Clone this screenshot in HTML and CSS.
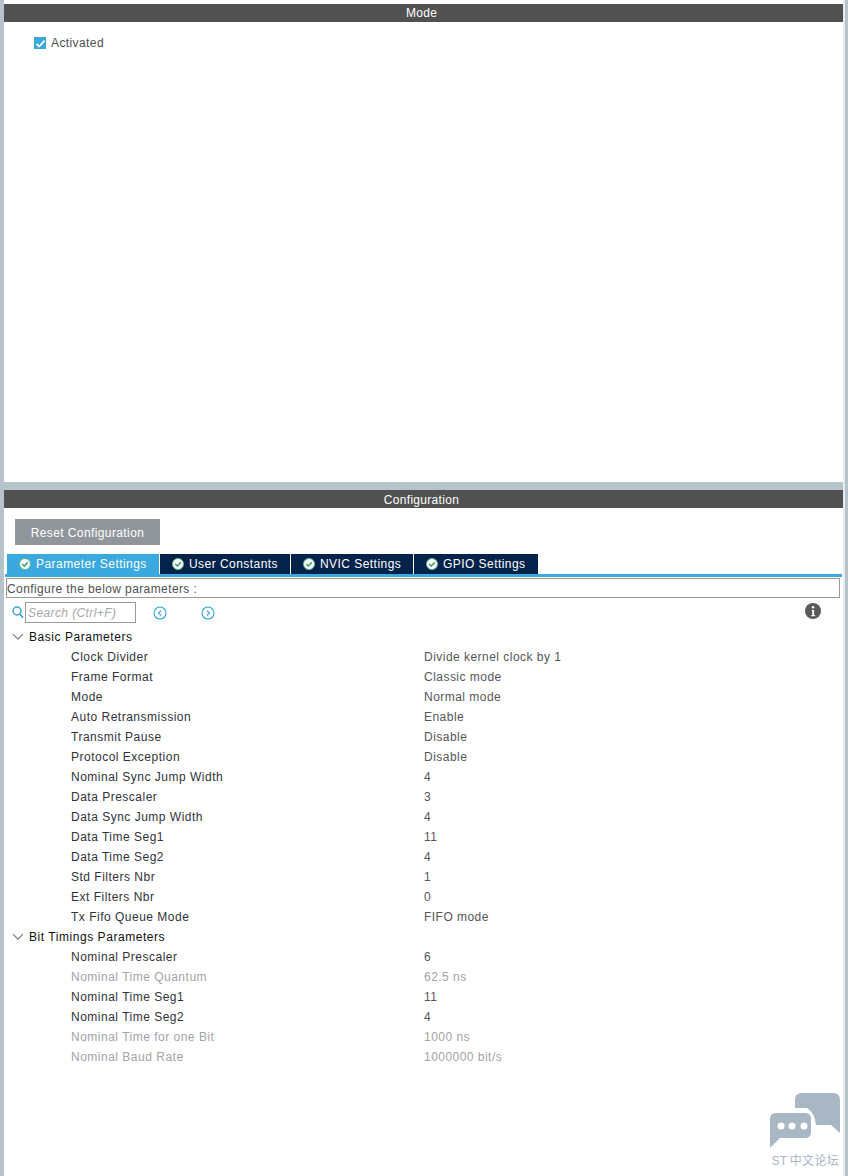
FILE: index.html
```html
<!DOCTYPE html>
<html lang="en">
<head>
    <meta charset="UTF-8">
    <title>Configuration</title>
    <link rel="stylesheet" href="styles.css">
</head>
<body>
    <div class="app">
        <section class="mode-panel">
            <h2 class="panel-title">Mode</h2>
            <label class="activated">
                <span class="checkbox">
                    <svg width="13" height="13" viewBox="0 0 13 13"><path d="M2.5 6.8 5.2 9.5 10.5 3.6" fill="none" stroke="#fff" stroke-width="1.7"/></svg>
                </span>
                Activated
            </label>
        </section>

        <section class="config-panel">
            <h2 class="panel-title">Configuration</h2>
            <button class="reset-btn">Reset Configuration</button>

            <div class="tabs">
                <div class="tab tab-active tab-param">
                    <svg class="tab-icon" width="12" height="12" viewBox="0 0 12 12"><circle cx="6" cy="6" r="5.5" fill="#fff" stroke="#5fb98a"/><path d="M3.2 6 5.3 8 8.8 4.2" fill="none" stroke="#3fa36e" stroke-width="1.6"/></svg>
                    Parameter Settings
                </div>
                <div class="tab tab-user">
                    <svg class="tab-icon" width="12" height="12" viewBox="0 0 12 12"><circle cx="6" cy="6" r="5.5" fill="#fff" stroke="#5fb98a"/><path d="M3.2 6 5.3 8 8.8 4.2" fill="none" stroke="#3fa36e" stroke-width="1.6"/></svg>
                    User Constants
                </div>
                <div class="tab tab-nvic">
                    <svg class="tab-icon" width="12" height="12" viewBox="0 0 12 12"><circle cx="6" cy="6" r="5.5" fill="#fff" stroke="#5fb98a"/><path d="M3.2 6 5.3 8 8.8 4.2" fill="none" stroke="#3fa36e" stroke-width="1.6"/></svg>
                    NVIC Settings
                </div>
                <div class="tab tab-gpio">
                    <svg class="tab-icon" width="12" height="12" viewBox="0 0 12 12"><circle cx="6" cy="6" r="5.5" fill="#fff" stroke="#5fb98a"/><path d="M3.2 6 5.3 8 8.8 4.2" fill="none" stroke="#3fa36e" stroke-width="1.6"/></svg>
                    GPIO Settings
                </div>
            </div>

            <div class="configure-box">Configure the below parameters :</div>

            <div class="search-row">
                <svg class="search-icon" width="12" height="13" viewBox="0 0 12 13"><circle cx="5" cy="5" r="3.9" fill="none" stroke="#35a6dc" stroke-width="1.5"/><path d="M7.8 8 11 11.6" stroke="#35a6dc" stroke-width="1.7"/></svg>
                <div class="search-box">Search (Ctrl+F)</div>
                <svg class="nav-prev" width="14" height="14" viewBox="0 0 14 14"><circle cx="7" cy="7" r="6" fill="none" stroke="#35a6dc" stroke-width="1.1"/><path d="M8.2 4.4 5.6 7 8.2 9.6" fill="none" stroke="#35a6dc" stroke-width="1.1"/></svg>
                <svg class="nav-next" width="14" height="14" viewBox="0 0 14 14"><circle cx="7" cy="7" r="6" fill="none" stroke="#35a6dc" stroke-width="1.1"/><path d="M5.8 4.4 8.4 7 5.8 9.6" fill="none" stroke="#35a6dc" stroke-width="1.1"/></svg>
                <svg class="info-icon" width="16" height="16" viewBox="0 0 16 16"><circle cx="8" cy="8" r="8" fill="#5a5a5a"/><circle cx="8" cy="4.2" r="1.3" fill="#fff"/><path d="M6.7 7h2.4v5h1v1.2H6.3V12h1V8.1h-.6z" fill="#fff"/></svg>
            </div>

            <div class="group">
                <svg class="chevron" width="12" height="8" viewBox="0 0 12 8"><path d="M1 1.2 6 6.2 11 1.2" fill="none" stroke="#777" stroke-width="1.1"/></svg>
                Basic Parameters
            </div>
            <div class="row"><span class="name">Clock Divider</span><span class="value">Divide kernel clock by 1</span></div>
            <div class="row"><span class="name">Frame Format</span><span class="value">Classic mode</span></div>
            <div class="row"><span class="name">Mode</span><span class="value">Normal mode</span></div>
            <div class="row"><span class="name">Auto Retransmission</span><span class="value">Enable</span></div>
            <div class="row"><span class="name">Transmit Pause</span><span class="value">Disable</span></div>
            <div class="row"><span class="name">Protocol Exception</span><span class="value">Disable</span></div>
            <div class="row"><span class="name">Nominal Sync Jump Width</span><span class="value">4</span></div>
            <div class="row"><span class="name">Data Prescaler</span><span class="value">3</span></div>
            <div class="row"><span class="name">Data Sync Jump Width</span><span class="value">4</span></div>
            <div class="row"><span class="name">Data Time Seg1</span><span class="value">11</span></div>
            <div class="row"><span class="name">Data Time Seg2</span><span class="value">4</span></div>
            <div class="row"><span class="name">Std Filters Nbr</span><span class="value">1</span></div>
            <div class="row"><span class="name">Ext Filters Nbr</span><span class="value">0</span></div>
            <div class="row"><span class="name">Tx Fifo Queue Mode</span><span class="value">FIFO mode</span></div>

            <div class="group">
                <svg class="chevron" width="12" height="8" viewBox="0 0 12 8"><path d="M1 1.2 6 6.2 11 1.2" fill="none" stroke="#777" stroke-width="1.1"/></svg>
                Bit Timings Parameters
            </div>
            <div class="row"><span class="name">Nominal Prescaler</span><span class="value">6</span></div>
            <div class="row row-muted"><span class="name">Nominal Time Quantum</span><span class="value">62.5 ns</span></div>
            <div class="row"><span class="name">Nominal Time Seg1</span><span class="value">11</span></div>
            <div class="row"><span class="name">Nominal Time Seg2</span><span class="value">4</span></div>
            <div class="row row-muted"><span class="name">Nominal Time for one Bit</span><span class="value">1000 ns</span></div>
            <div class="row row-muted"><span class="name">Nominal Baud Rate</span><span class="value">1000000 bit/s</span></div>

            <div class="watermark">
                <svg width="71" height="55" viewBox="0 0 71 55">
                    <path d="M33 0H64Q71 0 71 7V40L62 32H47Q46 20 38 15H26V7Q26 0 33 0Z" fill="#a9b6c4"/>
                    <path d="M7 20H36Q42 20 42 26V39Q42 45 36 45H11L1 55V26Q1 20 7 20Z" fill="#a9b6c4"/>
                    <circle cx="12" cy="33" r="3.5" fill="#fff"/>
                    <circle cx="23" cy="33" r="3.5" fill="#fff"/>
                    <circle cx="35" cy="33" r="3.5" fill="#fff"/>
                </svg>
                <span class="watermark-text">ST 中文论坛</span>
            </div>
        </section>
    </div>
</body>
</html>
```

FILE: styles.css
```css
* {
    margin: 0;
    padding: 0;
    box-sizing: border-box;
    font-family: "Liberation Sans", Arial, "Noto Sans CJK SC", sans-serif;
}
html, body {
    height: 100%;
}
body {
    background-color: #fff;
    overflow: hidden;
    font-size: 12px;
    letter-spacing: 0.4px;
    color: #4f5052;
}
.app {
    height: 1176px;
    padding-top: 4px;
    display: flex;
    flex-direction: column;
    background: linear-gradient(to right, #b7c3cb 4px, transparent 4px, transparent 843px, #e9ecef 843px, #e9ecef 845px, #b7c3cb 845px);
}
.panel-title {
    height: 18px;
    line-height: 18px;
    padding-right: 4px;
    background-color: #505150;
    color: #fff;
    font-size: 12px;
    font-weight: normal;
    text-align: center;
    letter-spacing: 0.3px;
}
.mode-panel {
    margin: 0 5px 0 4px;
    height: 486px;
    background: #fff;
    border-bottom: 8px solid #b7c3cb;
}
.activated {
    display: flex;
    align-items: center;
    gap: 5px;
    margin: 14px 0 0 30px;
    height: 14px;
    letter-spacing: 0.4px;
}
.checkbox {
    display: block;
    width: 12px;
    height: 12px;
    background-color: #39a9e0;
}
.checkbox svg {
    display: block;
}
.config-panel {
    position: relative;
    flex: 1;
    margin: 0 5px 0 4px;
    padding-bottom: 20px;
    background: #fff;
}
.config-panel .panel-title {
    line-height: 20px;
}
.reset-btn {
    display: block;
    width: 145px;
    height: 26px;
    margin: 11px 0 9px 11px;
    padding-top: 2px;
    background-color: #90969c;
    border: none;
    color: #fff;
    font-size: 12px;
    letter-spacing: 0.4px;
}
.tabs {
    display: flex;
    gap: 1px;
    margin: 0 1px;
    padding-left: 2px;
    height: 23px;
    border-bottom: 3px solid #39a9e0;
}
.tab {
    display: flex;
    align-items: center;
    gap: 5px;
    height: 20px;
    padding-left: 12px;
    background-color: #03234b;
    color: #fff;
    letter-spacing: 0.45px;
}
.tab-active {
    background-color: #39a9e0;
}
.tab-param { width: 152px; }
.tab-user { width: 130px; }
.tab-nvic { width: 122px; }
.tab-gpio { width: 124px; }
.configure-box {
    height: 20px;
    line-height: 20px;
    margin: 1px 3px 0 2px;
    border: 1px solid #999;
}
.search-row {
    position: relative;
    display: flex;
    align-items: center;
    height: 27px;
    margin-top: 2px;
    padding: 0 0 2px 8px;
}
.search-box {
    width: 111px;
    height: 21px;
    line-height: 21px;
    margin-left: 1px;
    padding-left: 2px;
    border: 1px solid #999;
    color: #a8a8a8;
    font-style: italic;
    letter-spacing: 0.4px;
}
.nav-prev {
    margin-left: 17px;
}
.nav-next {
    margin-left: 34px;
}
.info-icon {
    position: absolute;
    right: 22px;
    top: 3px;
}
.group {
    display: flex;
    align-items: center;
    height: 20px;
    padding-left: 8px;
    color: #111;
    letter-spacing: 0.55px;
}
.chevron {
    margin-right: 5px;
}
.row {
    display: flex;
    align-items: center;
    height: 20px;
    padding-left: 67px;
}
.name {
    width: 353px;
    color: #30323a;
    letter-spacing: 0.5px;
}
.value {
    color: #55565a;
    letter-spacing: 0.47px;
}
.row-muted .name,
.row-muted .value {
    color: #a2a3a6;
}
.watermark {
    position: absolute;
    right: 3px;
    bottom: 8px;
    width: 72px;
    display: flex;
    flex-direction: column;
    align-items: flex-end;
}
.watermark svg {
    display: block;
}
.watermark-text {
    margin-top: 3px;
    margin-right: 1px;
    font-size: 12px;
    letter-spacing: 0.3px;
    word-spacing: -1px;
    color: #a9b6c4;
    white-space: nowrap;
}
```
